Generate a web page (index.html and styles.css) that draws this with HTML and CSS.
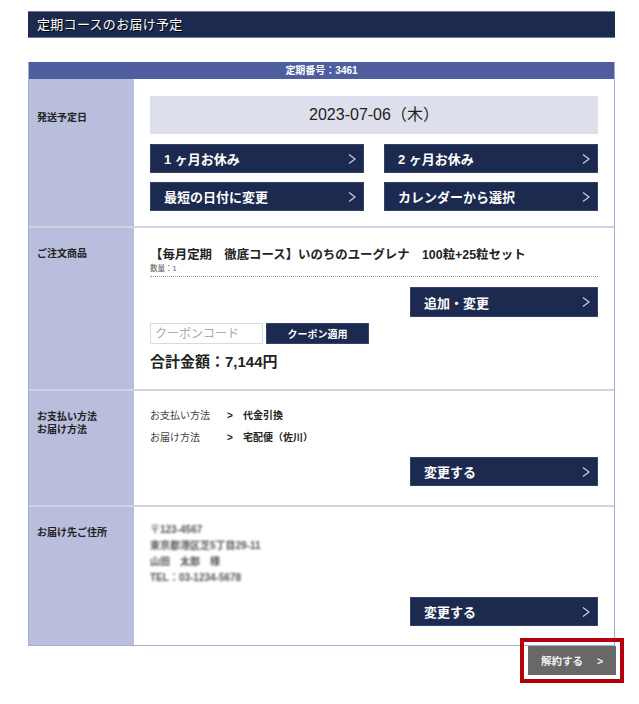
FILE: index.html
```html
<!DOCTYPE html>
<html lang="ja">
<head>
  <meta charset="utf-8">
  <title>定期コースのお届け予定</title>
  <link rel="stylesheet" href="styles.css">
</head>
<body>
  <div class="page">
    <h1 class="page-title">定期コースのお届け予定</h1>

    <div class="course">
      <div class="course-head">定期番号：3461</div>

      <!-- 発送予定日 -->
      <div class="course-row">
        <div class="course-label label-date">発送予定日</div>
        <div class="course-body body-date">
          <div class="next-date">2023-07-06（木）</div>
          <div class="date-actions">
            <a class="btn" href="#">1 ヶ月お休み<svg class="chev" width="8" height="10" viewBox="0 0 8 10"><polyline points="1,0.5 7,5 1,9.5"/></svg></a>
            <a class="btn" href="#">2 ヶ月お休み<svg class="chev" width="8" height="10" viewBox="0 0 8 10"><polyline points="1,0.5 7,5 1,9.5"/></svg></a>
            <a class="btn" href="#">最短の日付に変更<svg class="chev" width="8" height="10" viewBox="0 0 8 10"><polyline points="1,0.5 7,5 1,9.5"/></svg></a>
            <a class="btn" href="#">カレンダーから選択<svg class="chev" width="8" height="10" viewBox="0 0 8 10"><polyline points="1,0.5 7,5 1,9.5"/></svg></a>
          </div>
        </div>
      </div>

      <!-- ご注文商品 -->
      <div class="course-row">
        <div class="course-label">ご注文商品</div>
        <div class="course-body body-item">
          <div class="item-name">【毎月定期　徹底コース】いのちのユーグレナ　100粒+25粒セット</div>
          <div class="item-qty">数量：<span class="qty-num">1</span></div>
          <div class="row-action">
            <a class="btn btn-wide btn-tall" href="#">追加・変更<svg class="chev" width="8" height="10" viewBox="0 0 8 10"><polyline points="1,0.5 7,5 1,9.5"/></svg></a>
          </div>
          <div class="coupon">
            <input class="coupon-input" type="text" placeholder="クーポンコード">
            <button class="coupon-btn" type="button">クーポン適用</button>
          </div>
          <div class="total">合計金額：7,144円</div>
        </div>
      </div>

      <!-- お支払い方法 / お届け方法 -->
      <div class="course-row">
        <div class="course-label">お支払い方法<br>お届け方法</div>
        <div class="course-body body-payment">
          <div class="method"><span class="method-name">お支払い方法</span><span class="method-sep">&gt;</span><span class="method-value">代金引換</span></div>
          <div class="method"><span class="method-name">お届け方法</span><span class="method-sep">&gt;</span><span class="method-value">宅配便（佐川）</span></div>
          <div class="row-action action-payment">
            <a class="btn btn-wide" href="#">変更する<svg class="chev" width="8" height="10" viewBox="0 0 8 10"><polyline points="1,0.5 7,5 1,9.5"/></svg></a>
          </div>
        </div>
      </div>

      <!-- お届け先ご住所 -->
      <div class="course-row">
        <div class="course-label">お届け先ご住所</div>
        <div class="course-body body-address">
          <div class="address">
            <div>〒123-4567</div>
            <div>東京都港区芝5丁目29-11</div>
            <div>山田　太郎　様</div>
            <div>TEL：03-1234-5678</div>
          </div>
          <div class="row-action action-address">
            <a class="btn btn-wide" href="#">変更する<svg class="chev" width="8" height="10" viewBox="0 0 8 10"><polyline points="1,0.5 7,5 1,9.5"/></svg></a>
          </div>
        </div>
      </div>
    </div>

    <div class="cancel-wrap">
      <a class="btn-cancel" href="#"><span>解約する</span><span>&gt;</span></a>
    </div>
  </div>
</body>
</html>
```

FILE: styles.css
```css
body {
  margin: 0;
  font-family: "Liberation Sans", "Noto Sans CJK JP", sans-serif;
  color: #222;
  background-color: #fff;
}

.page {
  width: 587px;
  margin-left: 28px;
  padding-top: 11px;
  padding-bottom: 28px;
}

.page-title {
  margin: 0;
  height: 25px;
  padding-left: 9px;
  line-height: 25px;
  border-top: 1px solid #6f7897;
  border-bottom: 1px solid #6f7897;
  background-color: #1b2a4e;
  color: #fff;
  font-size: 13px;
  font-weight: normal;
  letter-spacing: 0.3px;
  text-shadow: 1px 1px 0 #000;
}

/* course table */
.course {
  margin-top: 24px;
  border: 1px solid #a5acd6;
  border-top: none;
}

.course-head {
  height: 17px;
  line-height: 17px;
  background-color: #4e5e9f;
  color: #fff;
  font-size: 10px;
  font-weight: bold;
  text-align: center;
}

.course-row {
  display: grid;
  grid-template-columns: 105px 1fr;
  border-top: 2px solid #cfd3e2;
}

.course-head + .course-row {
  border-top: none;
}

.course-label {
  padding: 19px 0 0 8px;
  background-color: #b9bedd;
  font-size: 10px;
  font-weight: bold;
  line-height: 13px;
}

.label-date {
  padding-top: 32px;
}

.course-body {
  padding: 0 16px;
}

/* buttons */
.btn {
  display: flex;
  align-items: center;
  justify-content: space-between;
  box-sizing: border-box;
  height: 29px;
  padding: 0 7px 0 13px;
  background-color: #1b2a4e;
  border: 1px solid #34426a;
  color: #fff;
  font-size: 13px;
  font-weight: bold;
  text-decoration: none;
}

.btn-wide {
  width: 188px;
}

.btn-tall {
  height: 30px;
}

.chev polyline {
  fill: none;
  stroke: #c9cee0;
  stroke-width: 1.2;
}

.row-action {
  display: flex;
  justify-content: flex-end;
}

/* 発送予定日 */
.body-date {
  padding-top: 17px;
  padding-bottom: 15px;
}

.next-date {
  height: 38px;
  line-height: 38px;
  background-color: #dde0ec;
  font-size: 16px;
  text-align: center;
}

.date-actions {
  display: grid;
  grid-template-columns: 1fr 1fr;
  column-gap: 20px;
  row-gap: 9px;
  margin-top: 10px;
}

/* ご注文商品 */
.body-item {
  padding-top: 18px;
  padding-bottom: 17px;
}

.item-name {
  font-size: 12.4px;
  font-weight: bold;
  line-height: 18px;
}

.item-qty {
  padding-bottom: 2px;
  border-bottom: 1px dotted #999;
  color: #555;
  font-size: 7.5px;
  line-height: 10px;
}

.qty-num {
  color: #6a4c9c;
}

.body-item .row-action {
  margin-top: 10px;
}

.coupon {
  display: flex;
  gap: 3px;
  margin-top: 6px;
}

.coupon-input {
  box-sizing: border-box;
  width: 113px;
  height: 21px;
  margin: 0;
  padding: 0 4px;
  border: 1px solid #d5dae8;
  font-family: inherit;
  font-size: 12px;
}

.coupon-input::placeholder {
  color: #aaa;
}

.coupon-btn {
  box-sizing: border-box;
  width: 103px;
  height: 21px;
  margin: 0;
  padding: 0;
  background-color: #1b2a4e;
  border: 1px solid #34426a;
  color: #fff;
  font-family: inherit;
  font-size: 10px;
  font-weight: bold;
}

.total {
  margin-top: 8px;
  font-size: 15px;
  font-weight: bold;
  line-height: 20px;
}

/* お支払い方法 */
.body-payment {
  padding-top: 14px;
  padding-bottom: 19px;
}

.method {
  display: flex;
  font-size: 10px;
  line-height: 22px;
}

.method-name {
  width: 77px;
  color: #444;
}

.method-sep {
  width: 16px;
  font-weight: bold;
}

.method-value {
  font-weight: bold;
}

.action-payment {
  margin-top: 8px;
}

/* お届け先ご住所 */
.body-address {
  padding-top: 15px;
  padding-bottom: 19px;
}

.address {
  color: #555;
  font-size: 10px;
  font-weight: bold;
  line-height: 16px;
  filter: blur(1.3px);
}

.action-address {
  margin-top: 11px;
}

/* 解約 */
.cancel-wrap {
  display: flex;
  justify-content: flex-end;
  margin-right: -1px;
}

.btn-cancel {
  display: flex;
  align-items: center;
  justify-content: center;
  gap: 14px;
  width: 88px;
  height: 29px;
  background-color: #686868;
  color: #f2f2f2;
  font-size: 10.5px;
  font-weight: bold;
  text-decoration: none;
  outline: 4px solid #b4000c;
  outline-offset: 4px;
}
```
